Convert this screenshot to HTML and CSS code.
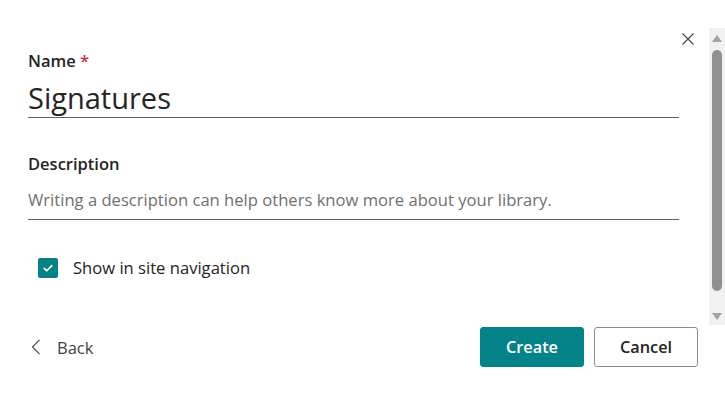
FILE: index.html
```html
<!DOCTYPE html>
<html>
<head>
<meta charset="utf-8">
<link rel="stylesheet" href="styles.css">
</head>
<body>
<div class="panel">
  <div class="scroller">
    <div class="content">
      <div class="header">
        <button class="close" aria-label="Close">
          <svg width="12" height="12" viewBox="0 0 12 12"><path d="M0.5 0.5 L11.5 11.5 M11.5 0.5 L0.5 11.5" stroke="#424242" stroke-width="1.1" fill="none"/></svg>
        </button>
      </div>
      <div class="fields">
        <label class="label">Name <span class="req">*</span></label>
        <div class="input big">Signatures</div>
        <label class="label desc-label">Description</label>
        <div class="input placeholder">Writing a description can help others know more about your library.</div>
        <div class="check-row">
          <span class="checkbox">
            <svg width="12" height="12" viewBox="0 0 12 12"><path d="M2.2 6.3 L4.8 8.8 L9.8 3.6" stroke="#fff" stroke-width="1.6" fill="none" stroke-linecap="round" stroke-linejoin="round"/></svg>
          </span>
          <span class="check-text">Show in site navigation</span>
        </div>
      </div>
    </div>
    <div class="scrollbar">
      <span class="arrow up"></span>
      <span class="thumb"></span>
      <span class="arrow down"></span>
    </div>
  </div>
  <div class="footer">
    <button class="back">
      <svg width="10" height="16" viewBox="0 0 10 16"><path d="M8.5 0.8 L1.5 8 L8.5 15.2" stroke="#424242" stroke-width="1.1" fill="none"/></svg>
      <span>Back</span>
    </button>
    <div class="actions">
      <button class="btn primary">Create</button>
      <button class="btn secondary">Cancel</button>
    </div>
  </div>
</div>
</body>
</html>
```
FILE: styles.css
```css
* { box-sizing: border-box; }
html, body { margin: 0; padding: 0; background: #fff; }
body {
  font-family: "Open Sans", "Noto Sans", sans-serif;
  color: #242424;
  width: 725px;
  height: 403px;
  overflow: hidden;
}
button { font-family: inherit; }
.panel {
  display: flex;
  flex-direction: column;
  height: 403px;
  padding-top: 28px;
}
.scroller {
  display: flex;
  height: 297px;
}
.content {
  flex: 1;
  padding: 0 16px 0 28px;
}
.header {
  display: flex;
  justify-content: flex-end;
  height: 22px;
  align-items: center;
}
.close {
  border: none;
  background: none;
  padding: 0;
  width: 12px;
  height: 12px;
  display: flex;
  margin-right: -1px;
  margin-top: -1px;
}
.fields {
  margin-right: 14px;
  display: flex;
  flex-direction: column;
}
.label {
  font-size: 16.5px;
  font-weight: 600;
  line-height: 22px;
  color: #242424;
  height: 22px;
}
.req { color: #c4314b; }
.input {
  border-bottom: 1px solid #616161;
}
.big {
  font-size: 29px;
  font-weight: 500;
  line-height: 38px;
  height: 46px;
  padding-top: 7px;
  color: #242424;
}
.desc-label { margin-top: 35px; }
.placeholder {
  margin-top: 10px;
  font-size: 16.6px;
  line-height: 22px;
  height: 35px;
  padding-top: 4px;
  color: #707070;
  white-space: nowrap;
}
.check-row {
  display: flex;
  align-items: center;
  margin-top: 37px;
  margin-left: 10px;
  gap: 15px;
}
.checkbox {
  width: 20px;
  height: 20px;
  background: #038387;
  border-radius: 2px;
  display: flex;
  align-items: center;
  justify-content: center;
}
.check-text {
  font-size: 16.6px;
  line-height: 22px;
  color: #242424;
}
.scrollbar {
  width: 16px;
  background: #f1f1f1;
  display: flex;
  flex-direction: column;
  align-items: center;
  padding: 7px 0 4px;
}
.arrow {
  width: 0;
  height: 0;
  border-left: 5px solid transparent;
  border-right: 5px solid transparent;
}
.arrow.up { border-bottom: 7px solid #a3a3a3; }
.arrow.down { border-top: 7px solid #a3a3a3; margin-top: 22px; }
.thumb {
  margin-top: 8px;
  width: 10px;
  height: 241px;
  background: #8f8f8f;
  border-radius: 5px;
}
.footer {
  display: flex;
  justify-content: space-between;
  padding: 2px 27px 0 31px;
}
.back {
  display: flex;
  align-items: center;
  gap: 16px;
  border: none;
  background: none;
  padding: 0;
  height: 40px;
  font-size: 16.5px;
  color: #424242;
}
.actions {
  display: flex;
  gap: 10px;
}
.btn {
  width: 104px;
  height: 40px;
  border-radius: 3px;
  font-size: 16.3px;
  font-weight: 600;
  padding: 0;
}
.primary {
  background: #038387;
  border: 1px solid #038387;
  color: #fff;
}
.secondary {
  background: #fff;
  border: 1px solid #8a8a8a;
  color: #242424;
}
```
